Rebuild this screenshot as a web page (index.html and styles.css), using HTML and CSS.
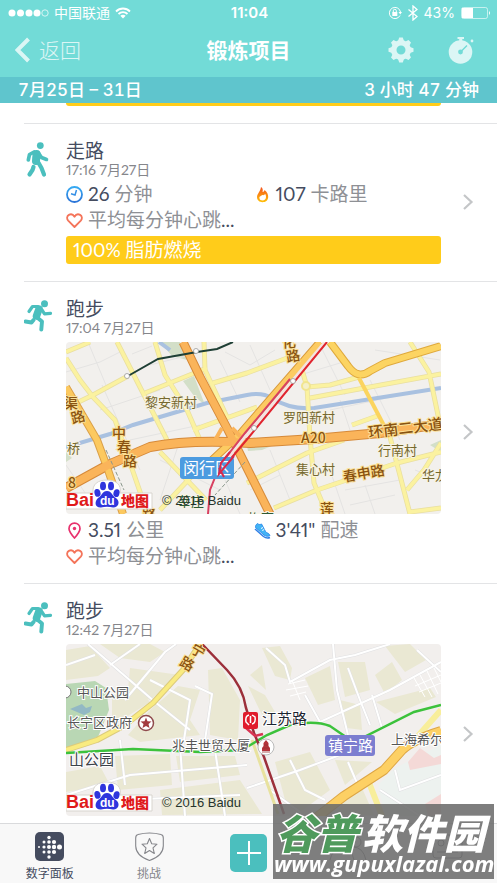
FILE: index.html
```
<!DOCTYPE html>
<html lang="zh-CN">
<head>
    <title>锻炼项目</title>
    <meta charset="utf-8" />
    <meta name="viewport" content="width=device-width, initial-scale=1">
    <link rel="stylesheet" href="styles.css">
</head>
<body>
    <!-- shared icons -->
    <svg class="defs" width="0" height="0" aria-hidden="true">
        <defs>
            <linearGradient id="blue" x1="0" y1="0" x2="0" y2="1">
                <stop offset="0" stop-color="#35a9f2" />
                <stop offset="1" stop-color="#2b74d8" />
            </linearGradient>
            <linearGradient id="fire" x1="0" y1="0" x2="0" y2="1">
                <stop offset="0" stop-color="#f4511e" />
                <stop offset="1" stop-color="#ffc107" />
            </linearGradient>
            <symbol id="walk" viewBox="0 0 30 36">
                <circle cx="16.300" cy="3.600" r="3.400" fill="#4bbfbe" />
                <g fill="none" stroke="#4bbfbe" stroke-linecap="round" stroke-linejoin="round">
                    <path d="M12.500 12 L12 19" stroke-width="8" />
                    <path d="M10 10 L5.500 12.500 L4.300 18 M14.500 11 L17.500 15.500 L22.500 17.500" stroke-width="3.600" />
                    <path d="M13.500 19 L17.500 26 L20 32.500 M9.500 25 L8.500 28 L5.500 32.500" stroke-width="4.200" />
                </g>
            </symbol>
            <symbol id="run" viewBox="0 0 30 32">
                <circle cx="20.500" cy="3.800" r="3.500" fill="#4bbfbe" />
                <g fill="none" stroke="#4bbfbe" stroke-linecap="round" stroke-linejoin="round">
                    <path d="M15 9 L12.500 16" stroke-width="7.500" />
                    <path d="M14 6.500 L8.500 6.500 L5 11.500 M18 10 L20.500 13.800 L26.500 13.300" stroke-width="3.200" />
                    <path d="M12.500 17 L18 21.500 L17.300 29.500 M9.500 20 L7.500 22.500 L1.500 21.500" stroke-width="3.900" />
                </g>
            </symbol>
            <symbol id="clock" viewBox="0 0 17 17">
                <circle cx="8.500" cy="8.500" r="7.500" fill="none" stroke="url(#blue)" stroke-width="1.800" />
                <path d="M10.500 4 L9 9 L5 7.800" fill="none" stroke="#3590e6" stroke-width="1.500" />
            </symbol>
            <symbol id="flame" viewBox="0 0 17 17">
                <path d="M7 1 C9 2 9 4 8.500 6 C9.700 6 10.300 5 10.500 4 C13 6 14.400 8.500 14.200 11 C14 14.500 11.500 16.200 8.500 16.200 C5.500 16.200 3 14.300 3 11 C3 8 6.500 5.500 7 1 Z M8.500 9 C7.500 10 5.200 10 5.400 12 C5.600 14 7 14.400 8.500 14.400 C10.500 14.400 12 13.300 12 11 C12 9.800 11.800 9 11.300 8 C10.500 9 9.500 9.400 8.500 9 Z" fill="url(#fire)" fill-rule="evenodd" />
            </symbol>
            <symbol id="heart" viewBox="0 0 17 17">
                <path d="M8.500 15 L2.200 8.600 C0.500 6.600 0.900 4 2.900 2.900 C5 1.800 7.300 2.700 8.500 4.800 C9.700 2.700 12 1.800 14.100 2.900 C16.100 4 16.500 6.600 14.800 8.600 Z" fill="none" stroke="#f4745a" stroke-width="1.800" stroke-linejoin="round" />
            </symbol>
            <symbol id="pin" viewBox="0 0 17 17">
                <path d="M8.500 16 C5 12 3 9.700 3 6.700 C3 3.300 5.500 1.200 8.500 1.200 C11.500 1.200 14 3.300 14 6.700 C14 9.700 12 12 8.500 16 Z" fill="none" stroke="#e8326e" stroke-width="1.700" stroke-linejoin="round" />
                <circle cx="8.500" cy="6.500" r="1.700" fill="#e8326e" />
            </symbol>
            <symbol id="shoe" viewBox="0 0 17 17">
                <path d="M3.500 1.500 C5 3 6.500 2.500 7.500 2 L11.500 9.500 C12.500 11 15.500 11.500 16 13.500 C14.500 14.800 12 14.500 10 13 L1.500 5.500 C1.300 4 2 2.500 3.500 1.500 Z" fill="#42b4f5" stroke="#2f8ded" stroke-width="1" />
                <path d="M1 7 L9.500 14.500 C11.500 16 14 16.300 16 15.500" fill="none" stroke="#2f7fe6" stroke-width="1.500" />
                <path d="M7 6.500 L9 5.500 M8.300 8.500 L10.300 7.500" stroke="#fff" stroke-width="1" />
            </symbol>
            <symbol id="chevron" viewBox="0 0 12 18">
                <path d="M2 2 L9.500 9 L2 16" fill="none" stroke="#c4c6c8" stroke-width="2.200" />
            </symbol>
            <symbol id="baidu" viewBox="0 0 90 32">
                <path d="M0 14 H27 C26 5 32 1 41 1 C50 1 56 6 54 14 H86 V30 H0 Z" fill="#fff" stroke="#d8d5cf" />
                <text x="0" y="27" class="logo-red logo-bai">Bai</text>
                <g fill="#2f35dd">
                    <ellipse cx="31.500" cy="14" rx="3" ry="4" transform="rotate(-15 31 14)" />
                    <ellipse cx="37" cy="7" rx="3" ry="4.300" />
                    <ellipse cx="45" cy="7" rx="3" ry="4.300" />
                    <ellipse cx="50.500" cy="14" rx="3" ry="4" transform="rotate(15 50 14)" />
                    <path d="M41 12 C46 12 46 17 50 19 C55 23 52 29 47 28.500 C43 27.500 39 27.500 35 28.500 C29 29 28 23 32 19 C36 17 36 12 41 12 Z" />
                </g>
                <text x="34" y="26" class="logo-du">du</text>
                <text x="55" y="27" class="logo-red logo-map">地图</text>
            </symbol>
        </defs>
    </svg>

    <div class="app">
        <header class="header">
            <div class="status">
                <div class="status-left">
                    <svg width="41" height="10" viewBox="0 0 41 10">
                        <g fill="#fff">
                            <circle cx="4" cy="5" r="3.500" />
                            <circle cx="12.500" cy="5" r="3.500" />
                            <circle cx="21" cy="5" r="3.500" />
                            <circle cx="29" cy="5" r="3.500" />
                        </g>
                        <circle cx="37" cy="5" r="3.200" fill="none" stroke="#fff" stroke-width=".7" />
                    </svg>
                    <span>中国联通</span>
                    <svg width="16" height="12" viewBox="0 0 16 12">
                        <g fill="none" stroke="#fff" stroke-width="1.800">
                            <path d="M1 4.500 C5 0.500 11 0.500 15 4.500" />
                            <path d="M3.500 7 C6 4.500 10 4.500 12.500 7" />
                        </g>
                        <path d="M5.300 8.800 C7 7.300 9 7.300 10.700 8.800 L8 11.500 Z" fill="#fff" />
                    </svg>
                </div>
                <span class="status-time">11:04</span>
                <div class="status-right">
                    <svg width="14" height="14" viewBox="0 0 14 14">
                        <path d="M12 9.500 A5.600 5.600 0 1 1 12.500 6" fill="none" stroke="#fff" stroke-width="1" />
                        <path d="M10.500 6 H14 L12.300 8.500 Z" fill="#fff" />
                        <rect x="4.300" y="6" width="5" height="4" fill="#fff" />
                        <path d="M5.300 6 V4.800 A1.500 1.500 0 0 1 8.300 4.800 V6" fill="none" stroke="#fff" />
                    </svg>
                    <svg width="10" height="16" viewBox="0 0 10 16">
                        <path d="M0.500 4.500 L9 11.500 L5 15 V1 L9 4.500 L0.500 11.500" fill="none" stroke="#fff" stroke-width="1.300" />
                    </svg>
                    <span>43%</span>
                    <svg width="30" height="12" viewBox="0 0 30 12">
                        <rect x=".5" y=".5" width="26" height="11" rx="2" fill="none" stroke="#fff" stroke-opacity=".6" />
                        <rect x="1" y="1" width="11" height="10" fill="#fff" />
                        <path d="M28 4 Q30 6 28 8 Z" fill="#fff" />
                    </svg>
                </div>
            </div>
            <nav class="nav">
                <a href="#" class="back">
                    <svg width="16" height="26" viewBox="0 0 16 26"><path d="M13.500 2 L2.500 13 L13.500 24" fill="none" stroke="#fff" stroke-width="4" /></svg>
                    返回
                </a>
                <h1>锻炼项目</h1>
                <div class="actions">
                    <button type="button" aria-label="设置">
                        <svg width="26" height="26" viewBox="0 0 26 26">
                            <g fill="#fff">
                                <path fill-rule="evenodd" d="M13 3 A10 10 0 1 0 13 23 A10 10 0 1 0 13 3 Z M13 8.500 A4.500 4.500 0 1 1 13 17.500 A4.500 4.500 0 1 1 13 8.500 Z" />
                                <path d="M11.200 0.500 H14.800 L16 4 H10 Z M11.200 25.500 H14.800 L16 22 H10 Z M0.500 11.200 V14.800 L4 16 V10 Z M25.500 11.200 V14.800 L22 16 V10 Z" />
                                <path d="M3 5.500 L5.500 3 L8.500 4.500 L4.500 8.500 Z M23 5.500 L20.500 3 L17.500 4.500 L21.500 8.500 Z M3 20.500 L5.500 23 L8.500 21.500 L4.500 17.500 Z M23 20.500 L20.500 23 L17.500 21.500 L21.500 17.500 Z" />
                            </g>
                        </svg>
                    </button>
                    <button type="button" aria-label="秒表">
                        <svg width="26" height="28" viewBox="0 0 26 28">
                            <path fill="#fff" d="M9.500 1 H16 V3 H14.300 V5 H11.200 V3 H9.500 Z" />
                            <circle cx="12.500" cy="16" r="11.800" fill="#fff" />
                            <circle cx="24" cy="5" r="1.400" fill="#fff" />
                            <circle cx="12.500" cy="16" r="2.400" fill="#72dbd7" />
                            <path d="M12.500 16 L19 9.500" stroke="#72dbd7" stroke-width="1.500" />
                        </svg>
                    </button>
                </div>
            </nav>
        </header>
        <div class="week">
            <span>7月25日 – 31日</span>
            <span>3 小时 47 分钟</span>
        </div>

        <ul class="list">
            <li class="item item-first">
                <div class="body"><div class="zone zone-end"></div></div>
            </li>
            <li class="item">
                <svg class="sport" width="30" height="36"><use href="#walk" /></svg>
                <div class="body">
                    <h2>走路</h2>
                    <p class="when">17:16 7月27日</p>
                    <div class="stats">
                        <p><svg width="17" height="17"><use href="#clock" /></svg><b>26</b> 分钟</p>
                        <p><svg width="17" height="17"><use href="#flame" /></svg><b>107</b> 卡路里</p>
                        <p><svg width="17" height="17"><use href="#heart" /></svg>平均每分钟心跳<b class="dots">...</b></p>
                    </div>
                    <div class="zone">100% 脂肪燃烧</div>
                </div>
                <a href="#" class="more" aria-label="走路详情"><svg width="12" height="18"><use href="#chevron" /></svg></a>
            </li>
            <li class="item">
                <svg class="sport" width="30" height="32"><use href="#run" /></svg>
                <div class="body">
                    <h2>跑步</h2>
                    <p class="when">17:04 7月27日</p>
                    <svg class="map" viewBox="66 342 375 172" preserveAspectRatio="xMidYMid slice" role="img" aria-label="闵行区地图">
                        <rect x="66" y="342" width="375" height="172" fill="#f2f0ed" />
                        <g fill="#d3dfc8">
                            <path d="M160 342 H180 L187 360 L172 356 Z M183 381 L194 376 L205 405 L194 396 Z M247 446 L274 445 L262 450 L248 451 Z" />
                            <path d="M430 445 L441 440 V452 Z M66 452 L72 458 L66 462 Z" />
                        </g>
                        <!-- small streets -->
                        <g fill="none" stroke="#e4e3e2" stroke-width="1">
                            <path d="M66 372 L100 362 L124 350 M88 342 L108 390 M102 385 L140 470 M132 354 L152 346 M150 365 L190 355 M100 410 L160 390 M130 440 L200 425" />
                            <path d="M225 352 L250 365 L275 350 M220 360 L240 402 M250 345 L270 390 M300 375 L350 360 M320 345 L345 395 M370 380 L400 440 M375 350 L440 360" />
                            <path d="M330 410 L425 390 M340 400 L350 430 M270 450 L290 500 M330 470 L345 514 M345 490 L400 480 M350 505 L395 495 M365 485 L375 514" />
                            <path d="M66 465 L90 500 M160 460 L220 490 M180 440 L160 500 M225 480 L240 514 M415 470 L440 480 M250 490 L280 475" />
                        </g>
                        <!-- river -->
                        <g fill="none" stroke="#a9c1e0" stroke-width="4">
                            <path d="M66 447 L110 434 L133 425 L207 403 L247 395 Q262 392 272 398 Q290 410 314 408 L441 388" />
                            <path d="M159 342 L170 350" />
                        </g>
                        <!-- yellow roads -->
                        <g fill="none" stroke-linejoin="round">
                            <g stroke="#e9dfa0" stroke-width="5">
                                <path d="M66 352 L90 342 M66 358 L80 380 L93 397 L115 420 L120 434 L147 512 M117 342 L143 393 L167 440 M66 408 L93 395 L128 376 M155 342 L165 375 L187 410 L200 440" />
                                <path d="M145 393 L207 368 M204 342 L205 370 L227 417 M213 383 L247 373 L290 357 M193 430 L257 407" />
                                <path d="M410 342 L429 372 L439 420 M310 398 L441 374 M300 363 L307 387 L310 437 L314 483 L327 514 M307 387 L330 385 L359 377 M247 483 L307 453 L344 440" />
                                <path d="M274 508 L317 490 L397 463 L441 452 M390 437 L410 514 M441 443 L424 470 L407 490 M410 512 L441 508 M352 425 L380 415 M160 452 L206 500 M160 510 L205 462" />
                            </g>
                            <g stroke="#fbf2a0" stroke-width="3.500">
                                <path d="M66 352 L90 342 M66 358 L80 380 L93 397 L115 420 L120 434 L147 512 M117 342 L143 393 L167 440 M66 408 L93 395 L128 376 M155 342 L165 375 L187 410 L200 440" />
                                <path d="M145 393 L207 368 M204 342 L205 370 L227 417 M213 383 L247 373 L290 357 M193 430 L257 407" />
                                <path d="M410 342 L429 372 L439 420 M310 398 L441 374 M300 363 L307 387 L310 437 L314 483 L327 514 M307 387 L330 385 L359 377 M247 483 L307 453 L344 440" />
                                <path d="M274 508 L317 490 L397 463 L441 452 M390 437 L410 514 M441 443 L424 470 L407 490 M410 512 L441 508 M352 425 L380 415 M160 452 L206 500 M160 510 L205 462" />
                            </g>
                            <circle cx="306" cy="386" r="4" fill="#f5f0c8" stroke="#f1e58f" stroke-width="2" />
                        </g>
                        <!-- highways -->
                        <g fill="none" stroke-linejoin="round">
                            <path d="M330 342 L348 366 Q358 380 370 371 L385 363 L441 346" stroke="#dfa93c" stroke-width="8" />
                            <path d="M330 342 L348 366 Q358 380 370 371 L385 363 L441 346" stroke="#fcd462" stroke-width="6" />
                            <path d="M359 378 L390 437" stroke="#fbd45e" stroke-width="4" />
                            <path d="M320 342 L240 434 L210 462" stroke="#d89a3c" stroke-width="8" />
                            <path d="M66 387 L97 440 L107 467 L123 514" stroke="#dba14a" stroke-width="8" />
                            <path d="M66 488 L108 465 L150 447 Q190 439 250 443 L314 439 L380 433 L441 424" stroke="#d68a3a" stroke-width="10" />
                            <path d="M183 342 L200 377 L228 430 L270 514" stroke="#d68a3a" stroke-width="9" />
                            <path d="M320 342 L240 434 L210 462" stroke="#fccb62" stroke-width="6" />
                            <path d="M66 387 L97 440 L107 467 L123 514" stroke="#fcc95f" stroke-width="6" />
                            <path d="M66 488 L108 465 L150 447 Q190 439 250 443 L314 439 L380 433 L441 424" stroke="#fab45a" stroke-width="8" />
                            <path d="M183 342 L200 377 L228 430 L270 514" stroke="#fab45a" stroke-width="7" />
                            <path d="M222 428 L214 442 M232 428 L242 438" stroke="#fab45a" stroke-width="4" />
                        </g>
                        <!-- rail lines -->
                        <path d="M128 376 L158 359 L197 352 L217 349 L233 342" fill="none" stroke="#1f3f35" stroke-width="2" />
                        <path d="M106 450 L124 490 M245 462 L215 495" fill="none" stroke="#8a978c" stroke-width="1" stroke-dasharray="4 2" />
                        <path d="M325 342 L248 433 L226 460" fill="none" stroke="#f3e3e0" stroke-width="3" />
                        <path d="M327 342 L249 437 L228 462" fill="none" stroke="#e0252f" stroke-width="2" />
                        <path d="M290 379 L245 433 L220 465 L210 490 L208 514" fill="none" stroke="#d84161" stroke-width="2" />
                        <g fill="#fff" stroke="#999" stroke-width=".8">
                            <circle cx="127" cy="376" r="2.500" />
                            <circle cx="196" cy="351" r="2.500" />
                            <circle cx="293" cy="381" r="2.500" />
                            <circle cx="254" cy="428" r="2.500" />
                        </g>
                        <!-- place names -->
                        <g class="place">
                            <text x="145" y="407">黎安新村</text>
                            <text x="283" y="422">罗阳新村</text>
                            <text x="296" y="474">集心村</text>
                            <text x="378" y="455">行南村</text>
                            <text x="422" y="480">华龙</text>
                            <text x="67" y="453">桥</text>
                        </g>
                        <g class="road">
                            <text x="64" y="408">渠</text>
                            <text x="71" y="422" transform="rotate(-15 78 417)">路</text>
                            <text x="112" y="438">中</text>
                            <text x="117" y="452">春</text>
                            <text x="123" y="466">路</text>
                            <text x="282" y="347">化</text>
                            <text x="286" y="361" transform="rotate(-10 293 356)">路</text>
                            <text x="320" y="514">莲</text>
                            <text x="142" y="519">路</text>
                            <text x="68" y="488">8</text>
                            <text x="344" y="482" transform="rotate(-10 344 482)">春申路</text>
                            <text x="301" y="443">A20</text>
                            <text x="369" y="438" class="road-big" transform="rotate(-7 369 438)">环南二大道</text>
                        </g>
                        <rect x="180" y="457" width="54" height="22" rx="3" fill="#4c9be0" />
                        <text x="183" y="474" class="badge">闵行区</text>
                        <path d="M234 456 L219 474 L221 463 L230 452 M219 468 L224 477" fill="none" stroke="#d5294d" stroke-width="2" />
                        <text x="178" y="506" class="place place-green">莘庄</text>
                        <text x="248" y="523" class="place place-green">梅南</text>
                        <text x="162" y="505" class="copy">© 2016 Baidu</text>
                        <use href="#baidu" x="66" y="479" width="90" height="32" />
                    </svg>
                    <div class="stats">
                        <p><svg width="17" height="17"><use href="#pin" /></svg><b>3.51</b> 公里</p>
                        <p><svg width="17" height="17"><use href="#shoe" /></svg><b>3'41"</b> 配速</p>
                        <p><svg width="17" height="17"><use href="#heart" /></svg>平均每分钟心跳<b class="dots">...</b></p>
                    </div>
                </div>
                <a href="#" class="more" aria-label="跑步详情"><svg width="12" height="18"><use href="#chevron" /></svg></a>
            </li>
            <li class="item">
                <svg class="sport" width="30" height="32"><use href="#run" /></svg>
                <div class="body">
                    <h2>跑步</h2>
                    <p class="when">12:42 7月27日</p>
                    <svg class="map" viewBox="66 644 375 172" preserveAspectRatio="xMidYMid slice" role="img" aria-label="江苏路地图">
                        <rect x="66" y="644" width="375" height="172" fill="#f2efed" />
                        <!-- blocks -->
                        <g fill="#eae8d3">
                            <path d="M66 650 L90 646 L110 668 L98 676 L66 680 Z M100 644 L150 644 L165 652 L150 662 L120 658 Z M130 668 L180 675 L150 700 L128 690 Z M112 696 L140 690 L150 702 L112 726 Z" />
                            <path d="M150 710 L178 686 L200 690 L190 720 L200 735 L140 742 L128 735 Z M208 670 L222 668 L240 700 L238 740 L210 735 Z M262 648 L280 646 L292 668 L290 680 L275 676 Z M305 678 L330 666 L335 700 L318 705 Z" />
                            <path d="M338 662 L365 662 L370 690 L345 697 Z M375 675 L392 662 L402 680 L385 694 Z M385 646 L410 644 L426 660 L405 672 Z M340 700 L360 705 L362 730 L347 728 Z M376 702 L430 688 L436 697 L395 714 Z" />
                            <path d="M66 772 L100 766 L110 785 L66 792 Z M115 756 L170 754 L172 785 L118 790 Z M176 756 L235 756 L240 775 L180 782 Z M160 790 L240 780 L262 814 L162 815 Z M275 762 L310 752 L330 790 L300 812 L285 800 Z" />
                            <path d="M335 760 L372 762 L345 785 Z M345 800 L362 788 L374 815 L335 815 Z M248 686 L265 695 L275 712 L262 715 Z M250 675 L262 665 L266 690 Z" />
                        </g>
                        <path d="M66 684 L95 681 L106 688 L109 710 L98 737 L66 749 Z" fill="#b9d7b4" />
                        <path d="M70 709 L82 704 L86 708 L92 706 L90 712 L84 715 Z" fill="#92b8c4" />
                        <path d="M395 768 L441 745 V816 L385 816 L378 785 Z" fill="#edf2ef" />
                        <path d="M408 762 L420 748 L434 758 L441 755 V764 L410 770 Z M425 804 L441 794 V816 H428 Z" fill="#f4d9d7" />
                        <!-- streets -->
                        <g fill="none" stroke="#e0e0e2" stroke-width="3">
                            <path d="M88 644 L155 702 L190 730 M125 700 L165 652 L176 644 M150 680 L190 700 L184 740 M95 655 L66 665 M110 665 L140 644 M195 686 L212 694 L205 740" />
                            <path d="M266 648 L285 665 L290 682 L330 660 L355 655 L390 644 M333 644 L337 690 L348 735 M305 695 L320 722 L390 690 L441 662 M417 650 L441 672 M348 668 L360 700 L370 725 M372 695 L382 728" />
                            <path d="M66 795 L130 775 L247 765 M120 740 L125 785 M180 745 L185 816 M215 750 L225 816 M247 788 L300 770 L340 755 M290 760 L305 790 L325 800 M270 790 L300 812 M348 762 L360 790" />
                            <path d="M395 770 L400 790 L441 775 M380 790 L420 816 M120 800 L240 795" />
                        </g>
                        <g fill="none" stroke="#fff" stroke-width="2">
                            <path d="M88 644 L155 702 L190 730 M125 700 L165 652 L176 644 M150 680 L190 700 L184 740 M95 655 L66 665 M110 665 L140 644 M195 686 L212 694 L205 740" />
                            <path d="M266 648 L285 665 L290 682 L330 660 L355 655 L390 644 M333 644 L337 690 L348 735 M305 695 L320 722 L390 690 L441 662 M417 650 L441 672 M348 668 L360 700 L370 725 M372 695 L382 728" />
                            <path d="M66 795 L130 775 L247 765 M120 740 L125 785 M180 745 L185 816 M215 750 L225 816 M247 788 L300 770 L340 755 M290 760 L305 790 L325 800 M270 790 L300 812 M348 762 L360 790" />
                            <path d="M395 770 L400 790 L441 775 M380 790 L420 816 M120 800 L240 795" />
                        </g>
                        <g fill="none" stroke="#fff" stroke-width="1">
                            <path d="M414 678 L425 697 M420 675 L432 697 M427 671 L438 694 M434 668 L441 682 M415 686 L441 675 M419 692 L441 683 M288 684 L305 680 M286 690 L308 686 M290 696 L306 692 M292 680 L300 700" />
                        </g>
                        <!-- main roads -->
                        <g fill="none" stroke-linejoin="round">
                            <path d="M200 644 L183 670 L153 703 L125 725 L97 740 L66 750" stroke="#dccb7c" stroke-width="6" />
                            <path d="M200 644 L183 670 L153 703 L125 725 L97 740 L66 750" stroke="#f9eb80" stroke-width="4" />
                            <path d="M252 740 L278 814" stroke="#e8e29f" stroke-width="3" />
                            <path d="M441 710 L418 736 M368 780 L382 816" stroke="#f8ee9b" stroke-width="6" />
                            <path d="M316 818 L344 796 L384 770 L402 750 Q412 740 441 731" stroke="#dda645" stroke-width="10" />
                            <path d="M316 818 L344 796 L384 770 L402 750 Q412 740 441 731" stroke="#fdd064" stroke-width="8" />
                        </g>
                        <path d="M66 753 L133 749 L200 752 L242 750 L267 735 L290 725 Q315 720 330 726 L346 737 L364 737 L414 712 L441 705" fill="none" stroke="#3cc23c" stroke-width="2.500" />
                        <path d="M202 644 L227 670 Q243 687 246 708 L254 733 L264 757 L284 814" fill="none" stroke="#9c2f3a" stroke-width="2.500" />
                        <path d="M246 728 L255 736 L263 734" fill="none" stroke="#d83452" stroke-width="2.500" />
                        <rect x="243" y="712" width="15" height="17" rx="2" fill="#e01c2c" />
                        <path d="M249 715 Q245 716 246 722 L249 725 M252 715 L255 717 Q256 723 252 724 M250.500 716 V723" fill="none" stroke="#fff" stroke-width="1.500" />
                        <circle cx="146" cy="723" r="7.500" fill="#fff" stroke="#8f4a4d" stroke-width="1.500" />
                        <path d="M146 717.500 L147.500 721.200 L151.500 721.500 L148.500 724 L149.500 728 L146 726 L142.500 728 L143.500 724 L140.500 721.500 L144.500 721.200 Z" fill="#a33b40" />
                        <circle cx="266" cy="747" r="8" fill="#fff" stroke="#bbb" />
                        <path d="M266 740 L268.500 743 V746 L270 748 V751 H262 V748 L263.500 746 V743 Z" fill="#b5333b" />
                        <path d="M262 752 H270 M264 745 H268 M263 748 H269" stroke="#933" stroke-width=".8" />
                        <circle cx="65" cy="692" r="6" fill="#fff" stroke="#777" />
                        <g class="spot">
                            <text x="77" y="697">中山公园</text>
                            <text x="67" y="727">长宁区政府</text>
                            <text x="172" y="750">兆丰世贸大厦</text>
                            <text x="391" y="744">上海希尔</text>
                            <text x="69" y="765" class="spot-dark">山公园</text>
                            <text x="262" y="724" class="spot-station">江苏路</text>
                        </g>
                        <g class="road">
                            <text x="191" y="656" transform="rotate(30 198 651)">宁</text>
                            <text x="180" y="669" transform="rotate(30 187 664)">路</text>
                        </g>
                        <rect x="325" y="735" width="50" height="21" rx="3" fill="#7c7ed0" />
                        <text x="328" y="751" class="badge badge-small">镇宁路</text>
                        <text x="162" y="807" class="copy">© 2016 Baidu</text>
                        <use href="#baidu" x="66" y="781" width="90" height="32" />
                    </svg>
                    <div class="stats">
                        <p><svg width="17" height="17"><use href="#pin" /></svg><b>3.02</b> 公里</p>
                        <p><svg width="17" height="17"><use href="#shoe" /></svg><b>5'12"</b> 配速</p>
                        <p><svg width="17" height="17"><use href="#heart" /></svg>平均每分钟心跳<b class="dots">...</b></p>
                    </div>
                </div>
                <a href="#" class="more" aria-label="跑步详情"><svg width="12" height="18"><use href="#chevron" /></svg></a>
            </li>
        </ul>

        <nav class="tabs">
            <a href="#" class="tab active">
                <svg width="29" height="29" viewBox="0 0 29 29">
                    <rect width="29" height="29" rx="5" fill="#454c5f" />
                    <g fill="#fff">
                        <circle cx="14" cy="5.500" r="1.700" />
                        <circle cx="9" cy="10" r="1.500" /><circle cx="14" cy="10" r="1.800" /><circle cx="19" cy="10" r="2.100" />
                        <circle cx="4" cy="15" r="1" /><circle cx="9" cy="15" r="1.600" /><circle cx="14" cy="15" r="2" /><circle cx="19" cy="15" r="2.200" /><circle cx="24.500" cy="15" r="2.500" />
                        <circle cx="9" cy="20" r="1.500" /><circle cx="14" cy="20" r="1.800" /><circle cx="19" cy="20" r="2.100" />
                        <circle cx="14" cy="25" r="1.700" />
                    </g>
                </svg>
                数字面板
            </a>
            <a href="#" class="tab">
                <svg width="29" height="29" viewBox="0 0 29 29">
                    <g fill="none" stroke="#85868b" stroke-width="1.100" stroke-linejoin="round">
                        <path d="M3 2.500 Q14.500 -0.500 26 2.500 Q28.300 3 28.300 6 V14 Q28 24 14.500 28.400 Q1 24 0.700 14 V6 Q0.700 3 3 2.500 Z" />
                        <path d="M14.500 6.500 L16.700 11.800 L22 12.200 L18 15.800 L19.300 21.500 L14.500 18.500 L9.700 21.500 L11 15.800 L7 12.200 L12.300 11.800 Z" />
                    </g>
                </svg>
                挑战
            </a>
            <div class="tab">
                <button type="button" class="add" aria-label="添加">
                    <svg width="24" height="24" viewBox="0 0 24 24"><path d="M12 0 V24 M0 12 H24" stroke="#fff" stroke-width="2" /></svg>
                </button>
            </div>
            <a href="#" class="tab" aria-label="好友">
                <svg width="38" height="29" viewBox="0 0 38 29">
                    <g fill="none" stroke="#85868b">
                        <circle cx="13" cy="8" r="7" />
                        <path d="M1 28 Q3 17 13 17 Q23 17 25 28 M24 15 Q34 15 37 28" />
                        <circle cx="27" cy="10" r="5" />
                    </g>
                </svg>
            </a>
            <a href="#" class="tab" aria-label="帐户">
                <svg width="31" height="29" viewBox="0 0 31 29">
                    <g fill="none" stroke="#85868b">
                        <rect x="1" y="3" width="29" height="23" rx="3" />
                        <circle cx="9" cy="11" r="3" />
                        <path d="M17 11 H26 M5 20 H26" />
                    </g>
                </svg>
            </a>
        </nav>
    </div>

    <div class="mark">
        <svg viewBox="0 0 221 75" role="img" aria-label="谷普软件园">
            <text x="3" y="45" class="mark-name mark-green">谷普</text>
            <text x="89" y="45" class="mark-name">软件园</text>
            <text x="1" y="68" class="mark-url">www.gupuxlazal.com</text>
        </svg>
    </div>
</body>
</html>
```
FILE: styles.css
```
* {
    box-sizing: border-box;
}

body {
    margin: 0;
    background-color: #fff;
    color: #454c5f;
    font-family: Lato, "Noto Sans CJK SC", sans-serif;
    font-variant-numeric: proportional-nums;
}

h1, h2, p, ul {
    margin: 0;
    padding: 0;
    font-weight: normal;
}

a {
    color: inherit;
    text-decoration: none;
}

button {
    border: 0;
    padding: 0;
    background: none;
}

svg {
    display: block;
    flex-shrink: 0;
}

.defs {
    position: absolute;
}

.app {
    display: flex;
    flex-direction: column;
    height: 100vh;
    overflow: hidden;
}

/* top bars */
.header {
    background-color: #72dbd7;
    color: #fff;
}

.status {
    display: grid;
    grid-template-columns: 1fr auto 1fr;
    align-items: center;
    height: 25px;
    padding: 0 6px 0 8px;
    font-size: 14px;
    line-height: 25px;
}

.status-left, .status-right {
    display: flex;
    align-items: center;
    gap: 5px;
}

.status-right {
    justify-content: flex-end;
    gap: 6px;
    font-family: Inter, sans-serif;
}

.status-time {
    font-family: Inter, sans-serif;
    font-size: 15px;
    font-weight: 600;
}

.nav {
    display: grid;
    grid-template-columns: 1fr auto 1fr;
    align-items: center;
    height: 52px;
    padding: 0 23px 2px 15px;
}

    .nav h1 {
        font-size: 21px;
        line-height: 30px;
        font-weight: bold;
        padding-left: 8px;
    }

.back {
    display: flex;
    align-items: center;
    gap: 8px;
    font-size: 21px;
    line-height: 30px;
    font-weight: 300;
    opacity: 0.75;
}

.actions {
    display: flex;
    align-items: center;
    justify-content: flex-end;
    gap: 34px;
    opacity: 0.75;
}

.week {
    display: flex;
    align-items: center;
    justify-content: space-between;
    height: 26px;
    padding: 0 18px;
    background-color: #5fc5cd;
    color: #fff;
    font-family: Inter, "Noto Sans CJK SC", sans-serif;
    font-size: 17px;
    line-height: 26px;
    font-weight: 500;
    font-variant-numeric: tabular-nums;
}

/* exercises */
.list {
    flex: 1;
    min-height: 0;
    overflow: hidden;
    list-style: none;
}

.item {
    display: grid;
    grid-template-columns: 42px 1fr 56px;
    margin-left: 24px;
    padding: 16px 0 14px;
    border-top: 1px solid #e3e4e6;
}

.item-first {
    padding-top: 0;
    border-top: 0;
}

.sport {
    margin-top: 2px;
}

.body {
    grid-column: 2;
    min-width: 0;
}

.item h2 {
    font-size: 19px;
    line-height: 22px;
}

.when {
    color: #85868b;
    font-size: 14px;
    line-height: 16px;
}

.map {
    width: 100%;
    height: 172px;
    margin-top: 6px;
    border-radius: 4px;
}

.stats {
    display: grid;
    grid-template-columns: 1fr 1fr;
    margin-top: 3px;
    color: #8e9095;
    font-size: 19px;
    line-height: 26px;
    font-weight: 300;
}

    .stats p {
        display: flex;
        align-items: center;
        gap: 5px;
        white-space: nowrap;
    }

    .stats b {
        color: #454c5f;
        font-weight: 400;
    }

    .stats .dots {
        margin-left: -5px;
    }

.zone {
    height: 28px;
    margin: 3px 0;
    padding: 0 7px;
    border-radius: 3px;
    background-color: #ffcc1a;
    color: #fff;
    font-size: 19px;
    line-height: 28px;
}

.zone-end {
    height: 3px;
    margin-top: 0;
    border-radius: 0 0 3px 3px;
}

.more {
    align-self: center;
    justify-self: center;
    padding: 0 2px 4px 0;
}

/* map lettering */
.place, .road, .spot, .badge {
    font-family: "Noto Sans CJK SC", sans-serif;
}

.place {
    fill: #75682f;
    font-size: 13px;
    paint-order: stroke;
    stroke: #f7f3e4;
    stroke-width: 2px;
}

.place-green {
    fill: #2f5a35;
}

.road {
    fill: #8a5310;
    font-size: 14px;
    font-weight: 500;
    paint-order: stroke;
    stroke: #fbdf94;
    stroke-width: 2px;
}

.road-big {
    font-size: 15px;
}

.badge {
    fill: #fff;
    font-size: 16px;
}

.badge-small {
    font-size: 15px;
}

.spot {
    fill: #555;
    font-size: 13px;
    paint-order: stroke;
    stroke: #fff;
    stroke-width: 2px;
}

.spot-dark {
    fill: #3c424a;
    font-size: 15px;
}

.spot-station {
    fill: #1c2430;
    font-size: 15px;
}

.copy {
    fill: #26342c;
    font-family: "Liberation Sans", sans-serif;
    font-size: 13px;
}

.logo-red {
    fill: #e01a1a;
    font-weight: bold;
}

.logo-bai {
    font-family: "Liberation Sans", sans-serif;
    font-size: 18px;
}

.logo-map {
    font-family: "Noto Sans CJK SC", sans-serif;
    font-weight: 900;
    font-size: 14px;
}

.logo-du {
    fill: #fff;
    font-family: "Liberation Sans", sans-serif;
    font-weight: bold;
    font-size: 12px;
}

/* bottom tabs */
.tabs {
    display: flex;
    height: 60px;
    border-top: 1px solid #d9dadc;
    background-color: #f8f8f8;
}

.tab {
    display: flex;
    flex: 1;
    flex-direction: column;
    align-items: center;
    padding-top: 8px;
    color: #85868b;
    font-size: 12px;
    line-height: 25px;
}

.active {
    color: #454c5f;
}

.add {
    display: flex;
    align-items: center;
    justify-content: center;
    width: 37px;
    height: 38px;
    margin-top: 2px;
    border-radius: 5px;
    background-color: #4bbfbe;
}

.mark {
    position: fixed;
    right: 3px;
    bottom: 4px;
    width: 221px;
    height: 75px;
    background-color: rgba(108, 108, 108, 0.88);
}

.mark-name {
    fill: #fff;
    font-family: "Noto Sans CJK SC", sans-serif;
    font-size: 41px;
    font-weight: 900;
    font-style: italic;
}

.mark-green {
    fill: #4f9a5c;
    paint-order: stroke;
    stroke: #fff;
    stroke-width: 3px;
}

.mark-url {
    fill: #fff;
    font-family: "Open Sans", sans-serif;
    font-size: 22px;
    font-weight: bold;
    font-style: italic;
}
```
